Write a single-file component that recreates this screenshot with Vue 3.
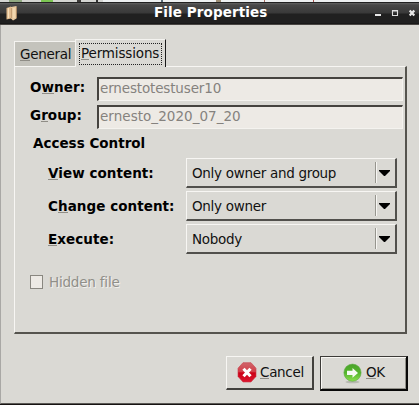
<script setup>
const owners = [
  { pre: 'O', key: 'w', post: 'ner:', value: 'ernestotestuser10', id: 'owner' },
  { pre: 'G', key: 'r', post: 'oup:', value: 'ernesto_2020_07_20', id: 'group' },
]
const access = [
  { pre: '', key: 'V', post: 'iew content:', value: 'Only owner and group' },
  { pre: 'C', key: 'h', post: 'ange content:', value: 'Only owner' },
  { pre: '', key: 'E', post: 'xecute:', value: 'Nobody' },
]
</script>

<template>
  <div class="window">
    <svg class="backdrop" width="419" height="2" viewBox="0 0 419 2">
      <rect width="419" height="2" fill="#eef1f2" />
      <rect width="103" height="2" fill="#d4d5d2" />
      <rect x="9" width="13" height="2" fill="#91a982" />
      <rect x="41" width="12" height="2" fill="#7cc653" />
      <rect x="77" width="4" height="2" fill="#3d3b39" />
      <rect x="96" width="2" height="2" fill="#333" />
      <rect x="161" width="2" height="2" fill="#596b78" />
      <rect x="216" width="5" height="2" fill="#9c8d75" />
      <rect x="264" width="1" height="2" fill="#a66b60" />
      <rect x="313" width="1" height="2" fill="#a6504c" />
    </svg>
    <header class="titlebar">
      <svg class="app-icon" width="12" height="16" viewBox="0 0 12 16">
        <path d="M.5 3 5 1.500v12L.5 14.500z" fill="#dfb98c" />
        <path d="M5 2 10.500 1v12.500L7 15.500l-2-2z" fill="#e8c99f" />
        <path d="M2.500 3v10M8 3v10" stroke="#f7dfba" stroke-width="1.200" />
        <path d="M5.500 3v10M10.500 2v11" stroke="#b58d62" stroke-width=".7" />
      </svg>
      <h1>File Properties</h1>
      <svg class="controls" width="42" height="8" viewBox="0 0 42 8">
        <path d="M0 5h6v2H0z" fill="#e8e8e8" />
        <path d="M17.500 1.500h5v5h-5zM17 2h6" fill="none" stroke="#dedede" stroke-width="1.100" />
        <path d="m34.700 1.500 4.600 5M39.300 1.500l-4.600 5" stroke="#e8e8e8" stroke-width="2.200" />
      </svg>
    </header>
    <main>
      <nav class="tabs">
        <div class="tab"><span><u>G</u>eneral</span></div>
        <div class="tab active"><span class="focus"><u>P</u>ermissions</span></div>
      </nav>
      <section class="panel">
        <div v-for="row in owners" :key="row.id" class="owner-row">
          <b>{{ row.pre }}<u>{{ row.key }}</u>{{ row.post }}</b>
          <div class="entry" :class="row.id">{{ row.value }}</div>
        </div>
        <h2>Access Control</h2>
        <div v-for="row in access" :key="row.key" class="access-row">
          <b>{{ row.pre }}<u>{{ row.key }}</u>{{ row.post }}</b>
          <div class="combo">
            <span>{{ row.value }}</span>
            <i></i>
            <svg width="11" height="6" viewBox="0 0 11 6"><path d="M0 0h11v1L6 6H5L0 1z" fill="#000" /></svg>
          </div>
        </div>
        <div class="hidden-file"><span class="box"></span><span>Hidden file</span></div>
      </section>
      <footer>
        <div class="button cancel">
          <svg width="20" height="21" viewBox="0 0 20 21">
            <defs><linearGradient id="red" x2="0" y2="1"><stop stop-color="#cf656a" /><stop offset=".48" stop-color="#d33d48" /><stop offset=".52" stop-color="#cc0016" /><stop offset="1" stop-color="#dc1730" /></linearGradient></defs>
            <path d="M6 .7h8l5 5.500v8.300L14 20H6L1 14.500V6.200z" fill="url(#red)" stroke="#c93b47" stroke-width=".6" />
            <path d="m6.500 6.700 7 7.600M13.500 6.700l-7 7.600" stroke="#fff" stroke-width="3.100" />
          </svg>
          <span><u>C</u>ancel</span>
        </div>
        <div class="button ok">
          <svg width="20" height="22" viewBox="0 0 20 22">
            <defs><linearGradient id="green" x2="0" y2="1"><stop stop-color="#4aa32a" /><stop offset=".5" stop-color="#54b52c" /><stop offset="1" stop-color="#8bdf4e" /></linearGradient></defs>
            <ellipse cx="10.500" cy="20" rx="7" ry="1.300" fill="#b7b9b1" />
            <circle cx="10.500" cy="10.700" r="8.600" fill="url(#green)" stroke="#5da943" stroke-width=".6" />
            <path d="M5 8.700h5.500V6l5.500 4.900-5.500 4.900V13H5z" fill="#f6faf3" />
          </svg>
          <span><u>O</u>K</span>
        </div>
      </footer>
    </main>
  </div>
</template>

<style>
body { margin: 0; overflow: hidden; }
</style>
<style scoped>
* { box-sizing: border-box; }
.window { width: 419px; height: 405px; display: flex; flex-direction: column; background: #dad9d4; color: #111; font: 13.5px/18px "DejaVu Sans", sans-serif; letter-spacing: -.3px; white-space: nowrap; border-bottom: 1px solid #161312; }
.backdrop { display: block; flex: none; }
.titlebar { height: 23px; flex: none; display: flex; align-items: flex-start; border-top: 1px solid #222; border-bottom: 1px solid #484542; background: linear-gradient(#626262 0, #484848 2px, #393939 10px, #202020 11px, #202020 20px, #111 21px); }
.app-icon { margin: 2px 0 0 6px; }
h1 { margin: 0; padding-left: 136px; width: 268px; font-size: 13.5px; line-height: 18px; color: #fff; font-weight: bold; letter-spacing: .1px; }
.controls { margin: 6px 0 0 89px; }
main { flex: 1; border-left: 1px solid #a9a8a5; border-bottom: 1px solid #5b5955; padding: 14px 0 0 13px; }
u { text-decoration: none; background: linear-gradient(#8f8d86, #8f8d86) left bottom 1px / 100% 1px no-repeat; }
b { color: #000; letter-spacing: .05px; }
.tabs { height: 27px; display: flex; align-items: flex-end; }
.tab { width: 61px; height: 25px; background: #c4c3bc; border: 1px solid #f4f3f0; border-right: 0; border-bottom: 0; padding: 3px 0 0 5px; }
.tab.active { width: 91px; height: 28px; margin-bottom: -1px; background: #dad9d4; border-right: 1px solid #191919; padding: 3px 3px 0; position: relative; letter-spacing: -.15px; }
.focus { display: block; height: 22px; border: 1px dotted #222; padding: 0 1px; }
.panel { width: 393px; height: 268px; border: solid; border-width: 1px 2px 2px 1px; border-color: #f7f6f3 #55544e #55544e #f7f6f3; padding: 10px 0 0 15px; }
.owner-row { display: flex; height: 28px; }
.owner-row b { width: 67px; padding-top: 1px; }
.entry { width: 306px; height: 24px; background: #edeae5; border: solid; border-width: 2px 1px 1px 2px; border-color: #45433f #f4f3ef #f4f3ef #45433f; color: #85827e; padding: 0 0 0 1px; letter-spacing: -.15px; }
.entry.group { letter-spacing: .04px; }
h2 { margin: 1px 0 0 3px; height: 24px; font-size: 13.5px; line-height: 18px; letter-spacing: 0; color: #000; }
.access-row { height: 33px; display: flex; padding-left: 18px; }
.access-row b { width: 138px; padding-top: 6px; }
.combo { width: 211px; height: 30px; display: flex; align-items: center; border: solid; border-width: 1px 2px 2px 1px; border-color: #f7f6f3 #51504c #51504c #f7f6f3; padding-left: 5px; }
.combo span { width: 183px; }
.combo i { width: 2px; height: 21px; border-left: 1px solid #96958e; border-right: 1px solid #f7f6f3; }
.combo svg { margin-left: 2px; }
.hidden-file { display: flex; align-items: center; gap: 6px; margin-top: 16px; color: #908f89; text-shadow: 1px 1px #f1f0ed; letter-spacing: -.2px; }
.box { width: 13px; height: 14px; border: 1px solid #898780; background: #edeae5; }
footer { display: flex; gap: 6px; padding: 22px 0 0 212px; }
.button { width: 88px; height: 34px; display: flex; align-items: center; border: solid; border-width: 1px 2px 2px 1px; border-color: #f7f6f3 #42413d #42413d #f7f6f3; padding-left: 10px; gap: 3px; }
.button span { padding-bottom: 2px; }
.ok { width: 88px; height: 35px; border-color: #3c3b38 #080808 #080808 #3c3b38; box-shadow: inset 1px 1px #f8f7f3, inset -1px -1px #92918a; padding-left: 21px; gap: 4px; }
</style>
